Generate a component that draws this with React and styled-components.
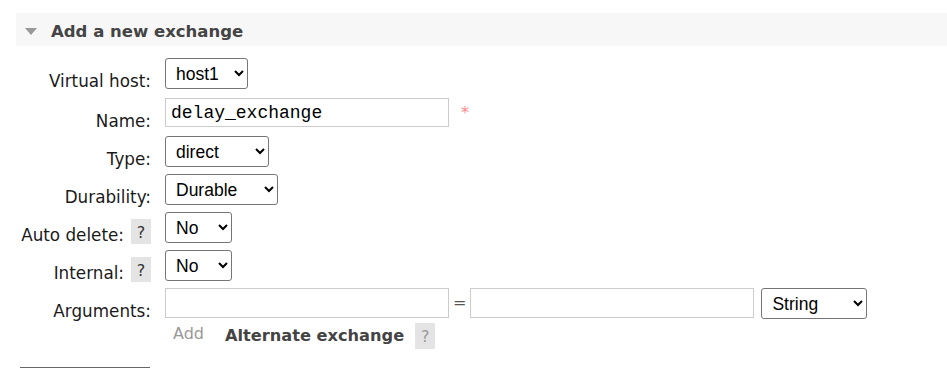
import React from 'react'
import styled, { createGlobalStyle } from 'styled-components'

const GlobalStyle = createGlobalStyle`
  html, body {
    margin: 0;
    padding: 0;
    background: #fff;
  }
  body {
    font-family: "DejaVu Sans", Verdana, sans-serif;
    font-size: 16.8px;
    color: #1a1a1a;
    overflow: hidden;
  }
`

const Page = styled.div`
  width: 947px;
  height: 368px;
  overflow: hidden;
`

const SectionHeader = styled.div`
  box-sizing: border-box;
  margin: 13px 0 0 16px;
  height: 33px;
  padding: 3px 0 0 9px;
  background: #f7f7f7;
  display: flex;
  align-items: center;
  gap: 14px;
`

const Toggle = styled.span`
  width: 0;
  height: 0;
  border-left: 6px solid transparent;
  border-right: 6px solid transparent;
  border-top: 7px solid #999;
  margin-top: 1px;
`

const Title = styled.h2`
  margin: 0;
  font-size: 16.5px;
  font-weight: bold;
  color: #444;
`

const Form = styled.div`
  margin-top: 12px;
`

const Row = styled.div`
  display: grid;
  grid-template-columns: 151px 1fr;
  column-gap: 14px;
  height: ${({ $h }) => $h || 38}px;
`

const Label = styled.div`
  display: flex;
  justify-content: flex-end;
  align-items: flex-start;
  gap: 7px;
`

const LabelText = styled.span`
  padding-top: 13px;
  line-height: 20px;
  white-space: nowrap;
`

const Help = styled.span`
  box-sizing: border-box;
  width: 20px;
  height: 25px;
  margin-top: ${({ $top }) => ($top === undefined ? 7 : $top)}px;
  padding-top: 2px;
  line-height: 23px;
  text-align: center;
  background: #e4e4e4;
  color: ${({ $muted }) => ($muted ? '#999' : '#333')};
  font-size: 16px;
`

const Controls = styled.div`
  display: flex;
  align-items: flex-start;
  gap: ${({ $gap }) => $gap || 0}px;
`

const Select = styled.select`
  box-sizing: border-box;
  width: ${({ $w }) => $w}px;
  height: 31px;
  margin: 0;
  margin-left: ${({ $ml }) => $ml || 0}px;
  padding: 0 4px 0 6px;
  font-family: "Liberation Sans", Arial, sans-serif;
  font-size: 17.5px;
  color: #000;
  background: #fff;
  border: 1px solid #767676;
  border-radius: 3px;
`

const TextInput = styled.input`
  box-sizing: border-box;
  width: 284px;
  height: ${({ $h }) => $h || 29}px;
  margin: 0;
  padding: 0 5px;
  border: 1px solid #ccc;
  border-radius: 0;
  font-family: "Liberation Mono", "Courier New", monospace;
  font-size: 18px;
  color: #000;
  outline: none;
`

const Required = styled.span`
  margin-left: 12px;
  padding-top: 5px;
  color: #f88;
  font-size: 16px;
  line-height: 20px;
`

const Equals = styled.span`
  line-height: 30px;
  color: #555;
  font-size: 16px;
`

const Links = styled.div`
  display: flex;
  align-items: flex-start;
`

const AddLink = styled.span`
  margin-left: 8px;
  padding-top: 1px;
  line-height: 20px;
  color: #999;
  font-size: 16px;
`

const Alternate = styled.span`
  margin-left: 21px;
  padding-top: 3px;
  line-height: 20px;
  font-weight: bold;
  color: #444;
  font-size: 16.2px;
`

const AlternateHelp = styled(Help)`
  margin-left: 11px;
  height: 26px;
`

const SubmitButton = styled.button`
  display: block;
  margin: 18px 0 0 20px;
  width: 130px;
  height: 30px;
  border: 1px solid #666;
  background: #666;
  padding: 0;
`

export default function App() {
  return (
    <Page>
      <GlobalStyle />
      <SectionHeader>
        <Toggle />
        <Title>Add a new exchange</Title>
      </SectionHeader>
      <Form>
        <Row $h={40}>
          <Label>
            <LabelText>Virtual host:</LabelText>
          </Label>
          <Controls>
            <Select $w={83} defaultValue="host1">
              <option>host1</option>
            </Select>
          </Controls>
        </Row>
        <Row>
          <Label>
            <LabelText>Name:</LabelText>
          </Label>
          <Controls>
            <TextInput defaultValue="delay_exchange" />
            <Required>*</Required>
          </Controls>
        </Row>
        <Row>
          <Label>
            <LabelText>Type:</LabelText>
          </Label>
          <Controls>
            <Select $w={104} defaultValue="direct">
              <option>direct</option>
              <option>fanout</option>
              <option>headers</option>
              <option>topic</option>
            </Select>
          </Controls>
        </Row>
        <Row>
          <Label>
            <LabelText>Durability:</LabelText>
          </Label>
          <Controls>
            <Select $w={113} defaultValue="Durable">
              <option>Durable</option>
              <option>Transient</option>
            </Select>
          </Controls>
        </Row>
        <Row>
          <Label>
            <LabelText>Auto delete:</LabelText>
            <Help>?</Help>
          </Label>
          <Controls>
            <Select $w={67} defaultValue="No">
              <option>No</option>
              <option>Yes</option>
            </Select>
          </Controls>
        </Row>
        <Row>
          <Label>
            <LabelText>Internal:</LabelText>
            <Help>?</Help>
          </Label>
          <Controls>
            <Select $w={67} defaultValue="No">
              <option>No</option>
              <option>Yes</option>
            </Select>
          </Controls>
        </Row>
        <Row $h={35}>
          <Label>
            <LabelText>Arguments:</LabelText>
          </Label>
          <Controls $gap={4}>
            <TextInput $h={30} />
            <Equals>=</Equals>
            <TextInput $h={30} />
            <Select $w={106} $ml={3} defaultValue="String">
              <option>String</option>
              <option>Number</option>
              <option>Boolean</option>
              <option>List</option>
            </Select>
          </Controls>
        </Row>
        <Row $h={26}>
          <div />
          <Links>
            <AddLink>Add</AddLink>
            <Alternate>Alternate exchange</Alternate>
            <AlternateHelp $top={0} $muted>?</AlternateHelp>
          </Links>
        </Row>
      </Form>
      <SubmitButton aria-label="Add exchange" />
    </Page>
  )
}
